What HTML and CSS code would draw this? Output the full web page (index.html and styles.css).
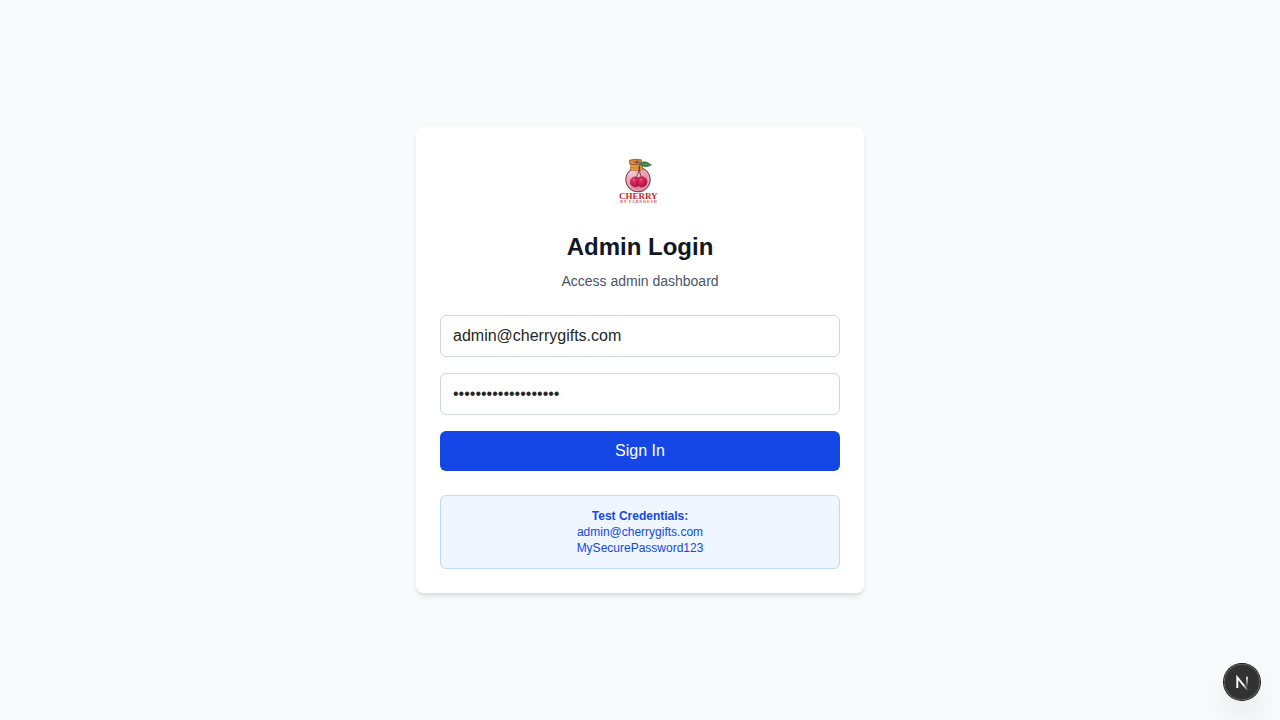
FILE: index.html
```html
<!DOCTYPE html>
<html lang="en">
<head>
<meta charset="utf-8">
<title>Admin Login</title>
<link rel="stylesheet" href="styles.css">
</head>
<body>
<main class="page">
  <section class="card">
    <header class="card-header">
      <svg class="logo" viewBox="0 0 64 64" role="img" aria-label="Cherry by Farnoosh">
        <defs>
          <radialGradient id="glass" cx=".4" cy=".3" r=".75">
            <stop offset="0" stop-color="#f6c3cf"/>
            <stop offset=".65" stop-color="#e890a5"/>
            <stop offset="1" stop-color="#cc6a83"/>
          </radialGradient>
          <radialGradient id="fruit" cx=".4" cy=".35" r=".7">
            <stop offset="0" stop-color="#e8386b"/>
            <stop offset="1" stop-color="#b80b40"/>
          </radialGradient>
        </defs>
        <circle cx="30" cy="28.6" r="12.3" fill="url(#glass)" stroke="#6b4049" stroke-width="1"/>
        <circle cx="30" cy="28.6" r="10.8" fill="none" stroke="#f8d3da" stroke-width=".6"/>
        <path d="M21.5 25.4q1.5-5 5.5-6" fill="none" stroke="#fff" stroke-width="1" opacity=".6"/>
        <path d="M22.8 14.2h11.4l.6 4.6q-6 1.8-12.4.2z" fill="#e9a53e" stroke="#a65a22" stroke-width=".6"/>
        <path d="M22.8 16.6q6 1.2 11.7 0" fill="none" stroke="#b86a25" stroke-width=".8"/>
        <path d="M21.4 9.2q6-1.5 12-.4l-.5 4.3q-5.8 1.2-11 .3z" fill="#d98a45" stroke="#79411f" stroke-width=".7"/>
        <path d="M26 11.1h5.5M29.7 9.3l-1.3 3.5" stroke="#6d3922" stroke-width=".9"/>
        <path d="M31 12.9q5.6-5 12.4 1.2-7 3.8-12.4-1.2z" fill="#39814c" stroke="#215437" stroke-width=".5"/>
        <path d="M32.5 13l9 .9" stroke="#79ad74" stroke-width=".5"/>
        <path d="M31.2 14.5q.8 7-4.7 13.5M31.4 15q-.2 7 2 12" fill="none" stroke="#5d2733" stroke-width=".8"/>
        <circle cx="27.5" cy="31" r="5.1" fill="url(#fruit)" stroke="#840d32" stroke-width=".5"/>
        <circle cx="33.8" cy="30.8" r="5.1" fill="url(#fruit)" stroke="#840d32" stroke-width=".5"/>
        <path d="M25 29.4l1.4-1.2M32.2 29l1.3-1" stroke="#f7a3b9" stroke-width=".8"/>
        <text class="logo-name" x="11" y="48.4" textLength="38.5" lengthAdjust="spacingAndGlyphs">CHERRY</text>
        <text class="logo-tagline" x="12.2" y="52.2" textLength="36.5">BY FARNOOSH</text>
      </svg>
      <h1 class="title">Admin Login</h1>
      <p class="subtitle">Access admin dashboard</p>
    </header>
    <form class="form">
      <input class="field" type="email" value="admin@cherrygifts.com" aria-label="Email">
      <input class="field" type="password" value="MySecurePassword123" aria-label="Password">
      <button class="submit" type="button">Sign In</button>
    </form>
    <div class="credentials">
      <strong>Test Credentials:</strong>
      <span>admin@cherrygifts.com</span>
      <span>MySecurePassword123</span>
    </div>
  </section>
</main>
<button class="dev-badge" type="button" aria-label="Open dev tools">
  <svg viewBox="0 0 36 36" fill="none">
    <defs>
      <linearGradient id="diag" gradientUnits="userSpaceOnUse" x1="19.5" y1="20.5" x2="24" y2="26.5">
        <stop stop-color="#fff"/><stop offset="1" stop-color="#fff" stop-opacity="0"/>
      </linearGradient>
      <linearGradient id="stem" gradientUnits="userSpaceOnUse" x1="0" y1="12" x2="0" y2="23.5">
        <stop stop-color="#fff"/><stop offset="1" stop-color="#fff" stop-opacity="0"/>
      </linearGradient>
    </defs>
    <path d="M24 26.6L13.3 13.4V24" stroke="url(#diag)" stroke-width="1.9"/>
    <path d="M23 12.7V23.5" stroke="url(#stem)" stroke-width="1.8"/>
  </svg>
</button>
</body>
</html>
```
FILE: styles.css
```css
* { box-sizing: border-box; }

body {
  margin: 0;
  background: #f9fafc;
  color: #171717;
  font-family: "Liberation Sans", Arial, sans-serif;
  font-size: 16px;
  line-height: 24px;
}

.page {
  display: flex;
  min-height: 100vh;
  align-items: center;
  justify-content: center;
}

.card {
  width: 448px;
  padding: 24px;
  background: #fff;
  border-radius: 8px;
  box-shadow: 0 4px 6px -1px rgba(0, 0, 0, .1), 0 2px 4px -2px rgba(0, 0, 0, .1);
}

.card-header {
  display: flex;
  flex-direction: column;
  align-items: center;
  margin-bottom: 24px;
}

.logo {
  width: 64px;
  height: 64px;
  margin-bottom: 16px;
}

.logo-name {
  fill: #cf1f2e;
  font: bold 9px "Liberation Serif", serif;
}

.logo-tagline {
  fill: #cc4657;
  font: bold 3.8px "Liberation Serif", serif;
}

.title {
  margin: 0 0 8px;
  color: #101828;
  font-size: 24px;
  font-weight: 700;
  line-height: 32px;
}

.subtitle {
  margin: 0;
  color: #4a5565;
  font-size: 14px;
  line-height: 20px;
}

.form {
  display: flex;
  flex-direction: column;
  gap: 16px;
}

.field {
  width: 100%;
  height: 42px;
  padding: 8px 12px;
  border: 1px solid #d1d5dc;
  border-radius: 6px;
  outline: none;
  background: #fff;
  color: #262626;
  font: inherit;
}

.submit {
  height: 40px;
  padding: 8px 16px;
  border: 0;
  border-radius: 6px;
  background: #1447e6;
  color: #fff;
  font: inherit;
}

.credentials {
  display: flex;
  flex-direction: column;
  align-items: center;
  margin-top: 24px;
  padding: 12px;
  border: 1px solid #bedbff;
  border-radius: 6px;
  background: #eff6ff;
  color: #1447e6;
  font-size: 12px;
  line-height: 16px;
}

.dev-badge {
  position: fixed;
  right: 20px;
  bottom: 20px;
  width: 36px;
  height: 36px;
  padding: 0;
  border: 0;
  border-radius: 50%;
  background: rgba(0, 0, 0, .8);
  box-shadow: 0 0 0 1px #171717, inset 0 0 0 1px hsla(0, 0%, 100%, .14), 0 16px 32px -8px rgba(0, 0, 0, .24);
}

.dev-badge svg {
  display: block;
  width: 36px;
  height: 36px;
}
```
